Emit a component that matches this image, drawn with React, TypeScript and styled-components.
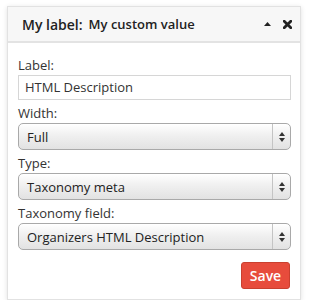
import styled, { createGlobalStyle } from "styled-components";

const GlobalStyle = createGlobalStyle`
  html, body {
    margin: 0;
    padding: 0;
    background: #fff;
  }
  body {
    font-family: "Open Sans", "Liberation Sans", sans-serif;
    color: #333;
  }
`;

const Page = styled.div`
  padding: 6px 0 0 7px;
`;

const Panel = styled.div`
  width: 292px;
  height: 292px;
  border: 1px solid #e2e2e2;
  background: #fff;
  box-shadow: 0 1px 5px rgba(0, 0, 0, 0.12);
  display: flex;
  flex-direction: column;
`;

const Header = styled.div`
  height: 34px;
  background: #f7f7f7;
  border-bottom: 2px solid #e3e3e3;
  display: flex;
  align-items: center;
  padding: 0 8px 0 14px;
  gap: 6px;
`;

const HeaderLabel = styled.span`
  font-size: 14px;
  font-weight: 600;
  color: #222;
`;

const HeaderValue = styled.span`
  font-size: 13px;
  font-weight: 600;
  color: #222;
  flex: 1;
`;

const HeaderIcons = styled.div`
  display: flex;
  align-items: center;
  gap: 12px;
`;

const Body = styled.div`
  padding: 13px 9px 0 10px;
  display: flex;
  flex-direction: column;
`;

const Label = styled.div`
  font-size: 13px;
  line-height: 19px;
  color: #333;
`;

const TextInput = styled.div`
  height: 23px;
  border: 1px solid #d6d6d6;
  padding: 0 6px;
  font-size: 13px;
  line-height: 23px;
  color: #333;
  margin-bottom: 4px;
`;

const Select = styled.div`
  height: 25px;
  border: 1px solid #a9a9a9;
  border-radius: 5px;
  background: linear-gradient(#ffffff, #f0f0f0 45%, #e2e2e2);
  box-shadow: inset 0 1px 0 #fff;
  display: flex;
  align-items: center;
  margin-bottom: 4px;
`;

const SelectText = styled.span`
  flex: 1;
  font-size: 13px;
  padding-left: 8px;
  color: #222;
`;

const SelectArrows = styled.div`
  width: 17px;
  height: 100%;
  border-left: 1px solid #c4c4c4;
  display: flex;
  align-items: center;
  justify-content: center;
`;

const Footer = styled.div`
  display: flex;
  justify-content: flex-end;
  margin-top: 8px;
`;

const SaveButton = styled.button`
  width: 49px;
  height: 27px;
  border: 1px solid #c9402f;
  border-radius: 3px;
  background: #e74c3c;
  color: #fff;
  font-family: "Open Sans", "Liberation Sans", sans-serif;
  font-size: 14px;
  font-weight: 600;
  padding: 0;
  margin-right: 1px;
`;

function Arrows() {
  return (
    <SelectArrows>
      <svg width="6" height="10" viewBox="0 0 6 10">
        <path d="M3 0 L6 4 H0 Z" fill="#333" />
        <path d="M0 6 H6 L3 10 Z" fill="#333" />
      </svg>
    </SelectArrows>
  );
}

function Dropdown({ value }: { value: string }) {
  return (
    <Select>
      <SelectText>{value}</SelectText>
      <Arrows />
    </Select>
  );
}

export default function App() {
  return (
    <Page>
      <GlobalStyle />
      <Panel>
        <Header>
          <HeaderLabel>My label:</HeaderLabel>
          <HeaderValue>My custom value</HeaderValue>
          <HeaderIcons>
            <svg width="7" height="4" viewBox="0 0 7 4">
              <path d="M3.5 0 L7 4 H0 Z" fill="#222" />
            </svg>
            <svg width="9" height="9" viewBox="0 0 9 9">
              <path
                d="M1.2 1.2 L7.8 7.8 M7.8 1.2 L1.2 7.8"
                stroke="#222"
                strokeWidth="2.8"
                strokeLinecap="square"
              />
            </svg>
          </HeaderIcons>
        </Header>
        <Body>
          <Label>Label:</Label>
          <TextInput>HTML Description</TextInput>
          <Label>Width:</Label>
          <Dropdown value="Full" />
          <Label>Type:</Label>
          <Dropdown value="Taxonomy meta" />
          <Label>Taxonomy field:</Label>
          <Dropdown value="Organizers HTML Description" />
          <Footer>
            <SaveButton>Save</SaveButton>
          </Footer>
        </Body>
      </Panel>
    </Page>
  );
}
